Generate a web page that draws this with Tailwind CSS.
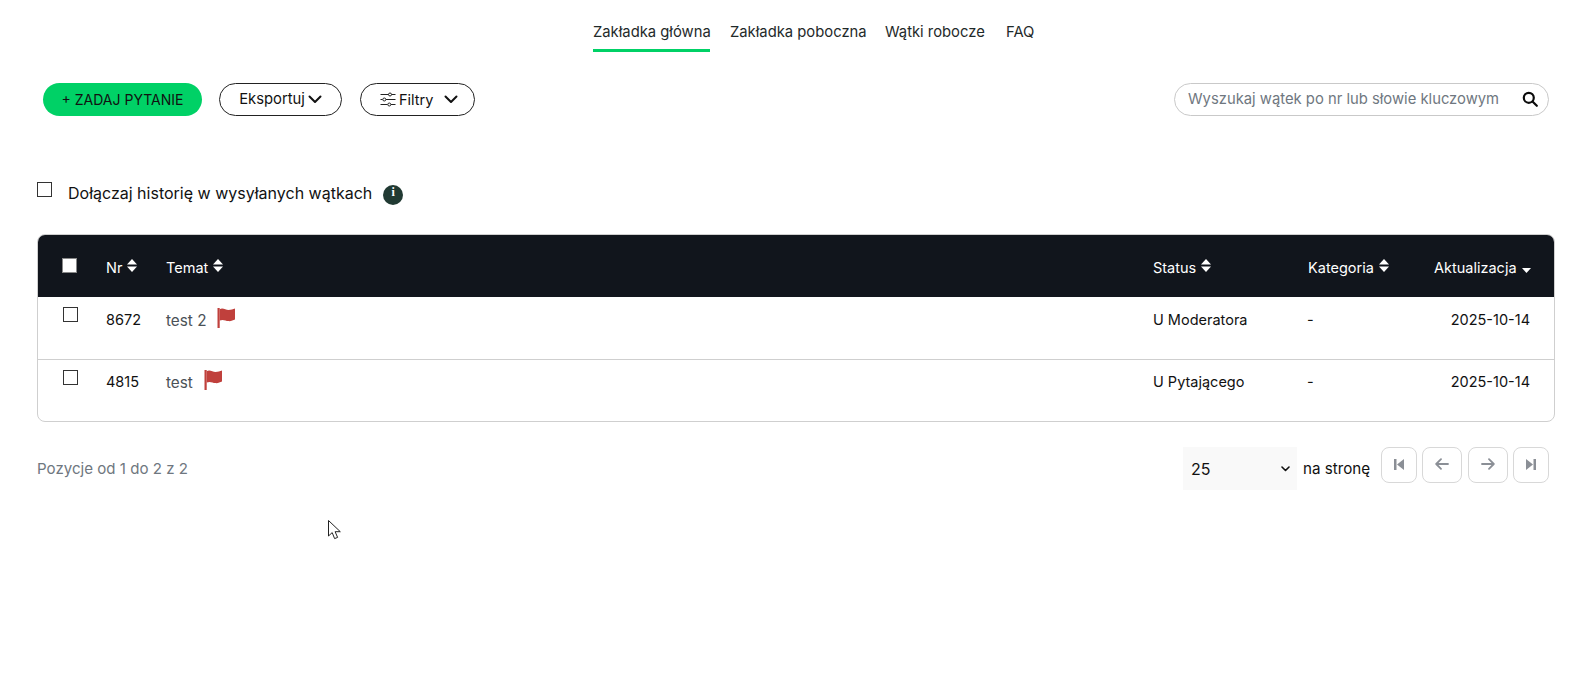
<!DOCTYPE html>
<html lang="pl">
<head>
<meta charset="utf-8">
<title>Wątki</title>
<script src="https://cdn.jsdelivr.net/npm/@tailwindcss/browser@4"></script>
</head>
<body class="bg-white font-['Inter','Liberation_Sans',sans-serif] text-[14.5px] text-[#111]">
<div class="relative w-[1590px] h-[680px] overflow-hidden">
  <nav class="flex justify-center gap-[20px] h-[52px] pt-[22px] pl-[37px] text-[#1f2a2a] text-[14.8px]">
    <a class="h-[30px] border-b-[3px] border-[#00d166] leading-[21px] w-[117px] whitespace-nowrap">Zakładka główna</a>
    <a class="leading-[21px] whitespace-nowrap w-[136px]">Zakładka poboczna</a>
    <a class="leading-[21px] whitespace-nowrap w-[101px] -ml-px">Wątki robocze</a>
    <a class="leading-[21px] whitespace-nowrap w-[28px]">FAQ</a>
  </nav>

  <div class="flex items-center mt-[31px] pl-[43px] pr-[41px] h-[33px]">
    <button class="w-[159px] h-[33px] rounded-full bg-[#00d166] text-center text-[14px] text-[#111] whitespace-nowrap">+ ZADAJ PYTANIE</button>
    <button class="ml-[17px] w-[123px] h-[33px] rounded-full border border-[#222] flex items-center justify-center gap-[3px] text-[14.8px]">
      Eksportuj
      <svg class="w-[14px] h-[9px]" viewBox="0 0 14 9" fill="none" stroke="#111" stroke-width="2" stroke-linecap="round" stroke-linejoin="round"><path d="M1.500 1.500 7 7l5.500-5.500"/></svg>
    </button>
    <button class="ml-[18px] w-[115px] h-[33px] rounded-full border border-[#222] flex items-center pl-[19px]">
      <svg class="w-[16px] h-[15px]" viewBox="0 0 16 15" fill="none" stroke="#222" stroke-width="1"><path d="M0.500 2.500h8M11.500 2.500h4M0.500 7.500h2M6 7.500h9.500M0.500 12.500h7M11 12.500h4.500"/><circle cx="10" cy="2.500" r="1.500"/><circle cx="4.300" cy="7.500" r="1.500"/><circle cx="9.300" cy="12.500" r="1.500"/></svg>
      <span class="ml-[3px]">Filtry</span>
      <svg class="ml-[11px] w-[14px] h-[9px]" viewBox="0 0 14 9" fill="none" stroke="#111" stroke-width="2" stroke-linecap="round" stroke-linejoin="round"><path d="M1.500 1.500 7 7l5.500-5.500"/></svg>
    </button>
    <div class="ml-auto w-[375px] h-[33px] rounded-full border border-[#c9c9c9] flex items-center pl-[13px] pr-[10px] justify-between">
      <span class="text-[14.8px] text-[#6f7780] whitespace-nowrap">Wyszukaj wątek po nr lub słowie kluczowym</span>
      <svg class="w-[16px] h-[16px] -mt-[2px]" viewBox="0 0 16 16" fill="none" stroke="#0b0b0b" stroke-width="2.200" stroke-linecap="round"><circle cx="6.800" cy="6.800" r="5"/><path d="m10.500 10.500 4.300 4.300"/></svg>
    </div>
  </div>

  <div class="flex items-start mt-[66px] pl-[37px] h-[37px]">
    <span class="block w-[15px] h-[15px] border border-[#333]"></span>
    <span class="ml-[16px] leading-[21px] text-[16px] whitespace-nowrap mt-px">Dołączaj historię w wysyłanych wątkach</span>
    <span class="ml-[11px] mt-[3px] w-[20px] h-[20px] rounded-full bg-[#213a33] text-white flex justify-center font-['Liberation_Serif',serif] font-bold text-[12px] leading-[15px]">i</span>
  </div>

  <div class="mx-[37px] mt-[15px] w-[1518px] h-[188px] rounded-[8px] border border-[#cfcfcf] overflow-hidden">
    <div class="-m-px grid grid-cols-[70px_59px_987px_155px_126px_121px] h-[63px] bg-[#11151c] text-white items-center text-[14.5px]">
      <span class="ml-[25px] block w-[15px] h-[15px] bg-white border border-[#888] -mt-[1px]"></span>
      <span class="flex items-center gap-[5px] mt-[5px] -ml-px">Nr
        <svg class="w-[10px] h-[13px] -mt-[6px]" viewBox="0 0 10 13" fill="#fff"><path d="M5 0 10 5.500H0z"/><path d="M0 7.500h10L5 13z"/></svg></span>
      <span class="flex items-center gap-[5px] mt-[5px]">Temat
        <svg class="w-[10px] h-[13px] -mt-[6px]" viewBox="0 0 10 13" fill="#fff"><path d="M5 0 10 5.500H0z"/><path d="M0 7.500h10L5 13z"/></svg></span>
      <span class="flex items-center gap-[5px] mt-[5px]">Status
        <svg class="w-[10px] h-[13px] -mt-[6px]" viewBox="0 0 10 13" fill="#fff"><path d="M5 0 10 5.500H0z"/><path d="M0 7.500h10L5 13z"/></svg></span>
      <span class="flex items-center gap-[5px] mt-[5px]">Kategoria
        <svg class="w-[10px] h-[13px] -mt-[6px]" viewBox="0 0 10 13" fill="#fff"><path d="M5 0 10 5.500H0z"/><path d="M0 7.500h10L5 13z"/></svg></span>
      <span class="flex items-center gap-[5px] mt-[5px] whitespace-nowrap">Aktualizacja
        <svg class="w-[9px] h-[5px] mt-[4px]" viewBox="0 0 9 5" fill="#fff"><path d="M0 0h9L4.500 5z"/></svg></span>
    </div>

    <div class="-mx-px grid grid-cols-[70px_59px_987px_155px_126px_121px] h-[63px] border-b border-[#cfcfcf] pt-[11px] mt-px text-[14.5px] leading-[21px]">
      <span class="ml-[26px] block w-[15px] h-[15px] border border-[#333] -mt-px"></span>
      <span class="mt-[1px] -ml-px">8672</span>
      <span class="flex items-start text-[#4b5157] text-[15.3px]"><span class="mt-[2px]">test 2</span>
        <svg class="ml-[11px] w-[19px] h-[20px]" viewBox="0 0 19 20"><path fill="#c0403c" d="M0.500 0h2.200v20H0.500z"/><path fill="#c0403c" d="M2.700 1.200C6 -0.500 8.500 2 11.500 2c2.500 0 4.500-.6 6.500-1.400v11c-2 1-4 1.700-6.500 1.500-3-.2-5.500-2.300-8.800-.5z"/></svg></span>
      <span class="mt-[1px]">U Moderatora</span>
      <span class="mt-[1px] -ml-px">-</span>
      <span class="mt-[1px] w-[96px] text-right">2025-10-14</span>
    </div>

    <div class="-mx-px grid grid-cols-[70px_59px_987px_155px_126px_121px] h-[61px] pt-[10px] text-[14.5px] leading-[21px]">
      <span class="ml-[26px] block w-[15px] h-[15px] border border-[#333]"></span>
      <span class="mt-[1px] -ml-px">4815</span>
      <span class="flex items-start text-[#4b5157] text-[15.3px]"><span class="mt-[2px]">test</span>
        <svg class="ml-[11px] w-[19px] h-[20px]" viewBox="0 0 19 20"><path fill="#c0403c" d="M0.500 0h2.200v20H0.500z"/><path fill="#c0403c" d="M2.700 1.200C6 -0.500 8.500 2 11.500 2c2.500 0 4.500-.6 6.500-1.400v11c-2 1-4 1.700-6.500 1.500-3-.2-5.500-2.300-8.800-.5z"/></svg></span>
      <span class="mt-[1px]">U Pytającego</span>
      <span class="mt-[1px] -ml-px">-</span>
      <span class="mt-[1px] w-[96px] text-right">2025-10-14</span>
    </div>
  </div>

  <div class="flex items-start mt-[25px] pl-[37px] pr-[41px]">
    <span class="mt-[11px] leading-[21px] text-[#6f7780] text-[15.1px]">Pozycje od 1 do 2 z 2</span>
    <div class="ml-auto w-[114px] h-[43px] bg-[#f9f9f9] flex items-center justify-between pl-[8px] pr-[7px] text-[16px]">
      <span>25</span>
      <svg class="w-[9px] h-[6px]" viewBox="0 0 9 6" fill="none" stroke="#111" stroke-width="1.600" stroke-linecap="round" stroke-linejoin="round"><path d="M1 1l3.500 3.500L8 1"/></svg>
    </div>
    <span class="ml-[6px] mt-[11px] leading-[21px] whitespace-nowrap text-[15.2px] w-[68px]">na stronę</span>
    <div class="ml-[11px] flex">
      <span class="w-[36px] h-[36px] rounded-[8px] border border-[#d8d8d8] flex items-center justify-center -ml-px">
        <svg class="w-[10px] h-[11px] -mt-[2px]" viewBox="0 0 10 11" fill="#8b8f96"><path d="M0 0h2.500v11H0zM10 0v11L3 5.500z"/></svg></span>
      <span class="ml-[5px] w-[40px] h-[36px] rounded-[8px] border border-[#d8d8d8] flex items-center justify-center">
        <svg class="w-[14px] h-[12px] -mt-[2px]" viewBox="0 0 14 12" fill="none" stroke="#8b8f96" stroke-width="1.800" stroke-linecap="round" stroke-linejoin="round"><path d="M13 6H1.500M6 1.200 1.200 6 6 10.800"/></svg></span>
      <span class="ml-[6px] w-[40px] h-[36px] rounded-[8px] border border-[#d8d8d8] flex items-center justify-center">
        <svg class="w-[14px] h-[12px] -mt-[2px]" viewBox="0 0 14 12" fill="none" stroke="#8b8f96" stroke-width="1.800" stroke-linecap="round" stroke-linejoin="round"><path d="M1 6h11.500M8 1.200 12.800 6 8 10.800"/></svg></span>
      <span class="ml-[5px] w-[36px] h-[36px] rounded-[8px] border border-[#d8d8d8] flex items-center justify-center">
        <svg class="w-[10px] h-[11px] -mt-[2px]" viewBox="0 0 10 11" fill="#8b8f96"><path d="M0 0v11l7-5.500zM7.500 0H10v11H7.500z"/></svg></span>
    </div>
  </div>

  <svg class="absolute left-[328px] top-[520px] w-[13px] h-[20px]" viewBox="0 0 13 20" fill="#fff" stroke="#222" stroke-width="1"><path d="M.5.500v15.500l3.700-3.400 2.400 6 3-1.200-2.500-5.700h5.200z"/></svg>
</div>
</body>
</html>
